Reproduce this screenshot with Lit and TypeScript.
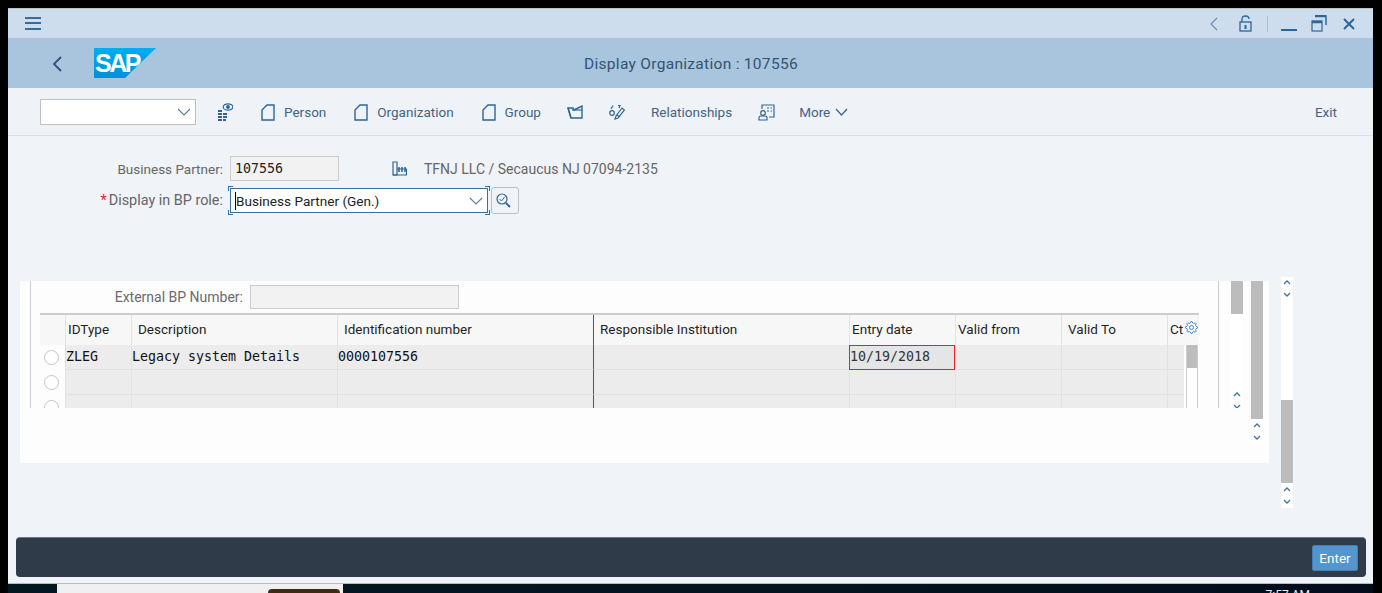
import { LitElement, html, css, svg } from 'lit';
import { customElement } from 'lit/decorators.js';

const icon = (w: number, h: number, body: unknown) => html`
  <svg width=${w} height=${h} viewBox="0 0 ${w} ${h}" fill="none" stroke="#2f6497" stroke-width="1.2">${body}</svg>`;

const docIcon = icon(14, 17, svg`<path d="M6 1H13V16H1V6Z" stroke-width="1.4"/>`);
const chevronDown = html`<svg width="14" height="8" viewBox="0 0 14 8" fill="none" stroke="#5f7f9c" stroke-width="1.1"><path d="M1 1L7 7L13 1"/></svg>`;
const scrollArrows = html`
  <svg width="12" height="20" viewBox="0 0 12 20" fill="none" stroke="#3f74a8" stroke-width="1.3">
    <path d="M3 6L6 3L9 6"/><path d="M3 15L6 18L9 15"/>
  </svg>`;

// gear outline: 8 teeth, alternating outer and inner radius
const gearPoints = Array.from({ length: 32 }, (_, i) => {
  const r = i % 4 < 2 ? 6 : 4.6;
  const a = ((i - 0.5) * Math.PI) / 16;
  return `${(6.5 + r * Math.cos(a)).toFixed(2)},${(6.5 + r * Math.sin(a)).toFixed(2)}`;
}).join(' ');

const columns = [
  { label: 'IDType', cls: 'p3' },
  { label: 'Description', cls: 'p7' },
  { label: 'Identification number', cls: 'p7' },
  { label: 'Responsible Institution', cls: 'p7 dark' },
  { label: 'Entry date', cls: 'p3' },
  { label: 'Valid from', cls: 'p3' },
  { label: 'Valid To', cls: 'p7' },
];

const rows = [
  ['ZLEG', 'Legacy system Details', '0000107556', '', '10/19/2018', '', '', ''],
  ['', '', '', '', '', '', '', ''],
  ['', '', '', '', '', '', '', ''],
];

@customElement('app-root')
class AppRoot extends LitElement {
  static styles = css`
    :host {
      display: block;
      width: 1382px;
      height: 593px;
      overflow: hidden;
      background: #000;
      padding: 8px 9px 0 8px;
      box-sizing: border-box;
      font-family: Roboto, "Liberation Sans", sans-serif;
      font-size: 14px;
      color: #32536f;
    }
    svg { display: block; flex: none; }
    .window {
      height: 576px;
      display: flex;
      flex-direction: column;
      background: #f0f3f7;
      border-top: 1px solid #b9c3cc;
      border-bottom: 1px solid #bbb;
      box-sizing: border-box;
    }
    .titlebar {
      height: 30px;
      flex: none;
      box-sizing: border-box;
      background: #cddded;
      border-bottom: 1px solid #b4c3d2;
      display: flex;
      align-items: center;
      padding: 0 18px 0 17px;
    }
    .titlebar .spacer { flex: 1; }
    .win-icons { display: flex; align-items: center; }
    .sep { width: 1px; height: 16px; background: #b3bfca; margin: 0 13px 0 15px; }
    .header {
      height: 49px;
      flex: none;
      background: #a9c4dd;
      display: flex;
      align-items: center;
      padding-left: 44px;
      position: relative;
    }
    .logo {
      width: 62px;
      height: 30px;
      margin-left: 32px;
      margin-top: -1px;
      background: linear-gradient(#00aeef, #0090d8);
      clip-path: polygon(0 0, 100% 0, 50% 100%, 0 100%);
      color: #fff;
      font: bold 25px/31px "Liberation Sans", sans-serif;
      letter-spacing: -2.5px;
      padding-left: 1px;
      box-sizing: border-box;
    }
    .title {
      position: absolute;
      left: 576px;
      top: 16px;
      font-size: 15.5px;
      letter-spacing: 0.3px;
      color: #2f5474;
    }
    .toolbar {
      height: 48px;
      flex: none;
      box-sizing: border-box;
      border-bottom: 1px solid #d5e0ec;
      background: #eff3f8;
      display: flex;
      align-items: center;
      padding: 1px 36px 0 32px;
      color: #3f6486;
      font-size: 13.5px;
    }
    .combo {
      width: 156px;
      height: 26px;
      box-sizing: border-box;
      border: 1px solid #bfbfbf;
      background: #fff;
      display: flex;
      align-items: center;
      justify-content: flex-end;
      padding-right: 4px;
      margin-right: 21px;
    }
    .tool { display: flex; align-items: center; gap: 9px; margin-right: 28px; }
    .tool.tight { margin-right: 26px; }
    .tool.more { gap: 5px; margin-right: 0; margin-left: -2px; }
    .toolbar .spacer { flex: 1; }
    .form {
      padding: 20px 0 0 0;
      height: 141px;
      box-sizing: border-box;
      flex: none;
      color: #666;
    }
    .form-row { display: flex; align-items: center; height: 25px; margin-bottom: 7px; }
    .form-label { width: 215px; text-align: right; margin-right: 7px; font-size: 13.5px; }
    .form-label.role { font-size: 14.4px; }
    .req { color: #d9262c; margin-right: 2px; }
    .readonly {
      width: 109px;
      height: 25px;
      box-sizing: border-box;
      border: 1px solid #ccc;
      background: #f2f2f2;
      color: #222;
      font: 13.3px/23px "DejaVu Sans Mono", monospace;
      padding-left: 4px;
      margin-right: 53px;
    }
    .partner { display: flex; align-items: center; gap: 17px; color: #666; }
    .select {
      position: relative;
      width: 258px;
      height: 25px;
      box-sizing: border-box;
      border: 1px solid #3a6f9f;
      background: #fff;
      display: flex;
      align-items: center;
      justify-content: space-between;
      padding: 0 4px 0 4px;
      color: #222;
      font-size: 13.6px;
    }
    .select .text { border-left: 1px solid #000; line-height: 18px; }
    .corner { position: absolute; width: 4px; height: 4px; border: 1px solid #3a6f9f; }
    .corner.tl { left: -3px; top: -3px; border-right: 0; border-bottom: 0; }
    .corner.tr { right: -3px; top: -3px; border-left: 0; border-bottom: 0; }
    .corner.bl { left: -3px; bottom: -3px; border-right: 0; border-top: 0; }
    .corner.br { right: -3px; bottom: -3px; border-left: 0; border-top: 0; }
    .search {
      width: 28px;
      height: 27px;
      box-sizing: border-box;
      margin-left: 3px;
      border: 1px solid #bfbfbf;
      border-radius: 3px;
      display: flex;
      align-items: center;
      justify-content: center;
      padding-right: 3px;
    }
    .stage { display: flex; align-items: flex-start; margin-left: 12px; height: 231px; flex: none; }
    .panel {
      margin-top: 4px;
      width: 1249px;
      height: 182px;
      background: #fdfdfe;
      display: flex;
      align-items: flex-start;
      padding-left: 10px;
      box-sizing: border-box;
      flex: none;
    }
    .frame {
      width: 1189px;
      height: 127px;
      box-sizing: border-box;
      overflow: hidden;
      border-left: 1px solid #ccc;
      border-right: 1px solid #ccc;
      padding-left: 9px;
      flex: none;
    }
    .ext { display: flex; align-items: center; height: 32px; color: #6b6b6b; }
    .ext .form-label { width: 203px; font-size: 14px; }
    .ext .box { width: 209px; height: 24px; box-sizing: border-box; border: 1px solid #ccc; background: #f2f2f2; }
    .thead {
      width: 1159px;
      height: 32px;
      box-sizing: border-box;
      border-top: 2px solid #ccc;
      display: grid;
      grid-template-columns: 25px 66px 206px 256px 256px 106px 106px 106px 32px;
      background: #f7f7f7;
      color: #1f1f1f;
      font-size: 13.5px;
    }
    .th {
      border-left: 1px solid #e2e2e2;
      line-height: 29px;
      box-sizing: border-box;
      white-space: nowrap;
    }
    .th:first-child { border-left: 0; }
    .th.ct { display: flex; justify-content: space-between; padding-right: 1px; }
    .th.ct svg { margin-top: 6px; }
    .p3 { padding-left: 2px; }
    .p7 { padding-left: 6px; }
    .dark { border-left: 1px solid #555 !important; }
    .tbody { display: flex; width: 1159px; }
    .rows { width: 1144px; flex: none; }
    .row {
      display: grid;
      grid-template-columns: 25px 66px 206px 256px 256px 106px 106px 106px 17px;
      height: 25px;
    }
    .radio-cell { display: flex; align-items: center; justify-content: center; padding-right: 3px; box-sizing: border-box; background: #fdfdfe; }
    .radio { width: 13px; height: 13px; border: 1px solid #c4c4c4; border-radius: 50%; background: #fff; }
    .td {
      background: #ececec;
      border-left: 1px solid #e2e2e2;
      border-bottom: 1px solid #e2e2e2;
      box-sizing: border-box;
      font: 13.3px/23px "DejaVu Sans Mono", monospace;
      color: #111;
      white-space: pre;
      overflow: hidden;
    }
    .td.active {
      border: 1px solid #e8202a;
      background: #e5e5e5;
      color: #333;
      line-height: 22px;
    }
    .inner-scroll {
      width: 15px;
      height: 63px;
      background: #fff;
      padding: 0 1px 0 2px;
      box-sizing: border-box;
      flex: none;
    }
    .inner-track { height: 100%; border-left: 1px solid #ccc; border-right: 1px solid #ccc; box-sizing: border-box; }
    .inner-thumb { height: 23px; background: #bcbcbc; }
    .sb { width: 12px; flex: none; display: flex; flex-direction: column; }
    .sb.one { margin-left: 12px; background: #fff; height: 127px; overflow: hidden; }
    .sb.two { margin-left: 8px; }
    .sb .thumb { background: #bcbcbc; flex: none; }
    .sb .fill { flex: 1; }
    .sb .arrows-end { height: 18px; flex: none; }
    .sb .arrows-two { background: #fff; padding: 2px 0 3px; }
    .sb .arrows-top { padding-top: 1px; }
    .sb .arrows-bottom { height: 25px; padding-top: 2px; box-sizing: border-box; }
    .sb.three { margin-left: 12px; background: #fff; height: 231px; }
    .dock {
      margin: auto 7px 6px 8px;
      height: 40px;
      flex: none;
      box-sizing: border-box;
      background: #2f3b48;
      border-top: 1px solid #6f7a84;
      border-radius: 4px;
      display: flex;
      align-items: center;
      justify-content: flex-end;
      padding-right: 8px;
    }
    .enter {
      width: 46px;
      height: 26px;
      box-sizing: border-box;
      background: #5495cd;
      border: 1px solid #4080b8;
      border-radius: 2px;
      color: #fff;
      text-align: center;
      line-height: 24px;
      font-size: 13.5px;
    }
    .taskbar {
      height: 9px;
      width: 1365px;
      display: flex;
      overflow: hidden;
      background: linear-gradient(90deg, #03171f, #04131f 60%, #020c1c);
    }
    .task-gap { width: 49px; }
    .task-app { width: 286px; background: #f0f0f0; padding: 5px 0 0 211px; box-sizing: border-box; }
    .task-pill { width: 72px; height: 4px; background: #3e2a10; border-radius: 5px 5px 0 0; }
    .clock {
      margin-left: auto;
      margin-right: 63px;
      padding-top: 4px;
      color: #eee;
      font-size: 12px;
      line-height: 14px;
    }
  `;

  render() {
    return html`
      <div class="window">
        <div class="titlebar">
          <svg width="16" height="13" viewBox="0 0 16 13" fill="#3a6a9a"><rect y="0" width="16" height="2"/><rect y="5" width="16" height="2"/><rect y="11" width="16" height="2"/></svg>
          <div class="spacer"></div>
          <div class="win-icons">
            <svg width="8" height="14" viewBox="0 0 8 14" fill="none" stroke="#6f8fb0" stroke-width="1.2" style="margin-right:21px"><path d="M7 1L1 7L7 13"/></svg>
            <svg width="13" height="17" viewBox="0 0 13 17" fill="none" stroke="#2f6497" stroke-width="1.3"><path d="M3 7V4Q3 1 6.500 1Q10 1 10 4"/><rect x="1" y="7" width="11" height="9"/><rect x="5.500" y="10" width="2" height="4" fill="#2f6497" stroke="none"/></svg>
            <div class="sep"></div>
            <svg width="16" height="17" viewBox="0 0 16 17" fill="none" stroke="#2f6497" stroke-width="2" style="margin-right:14px"><path d="M0 15H16"/></svg>
            <svg width="16" height="17" viewBox="0 0 16 17" fill="none" stroke="#2f6497" style="margin-right:16px"><path d="M4 1H15V10" stroke-width="1.5"/><path d="M4 1H15" stroke-width="2.500"/><rect x="1" y="6" width="10" height="10" stroke-width="1.200"/><path d="M1 7H11" stroke-width="2.500"/></svg>
            <svg width="12" height="12" viewBox="0 0 12 12" fill="none" stroke="#2f6497" stroke-width="2"><path d="M1 1L11 11M11 1L1 11"/></svg>
          </div>
        </div>

        <div class="header">
          <svg width="10" height="16" viewBox="0 0 10 16" fill="none" stroke="#2c5378" stroke-width="1.800"><path d="M9 1L2 8L9 15"/></svg>
          <div class="logo">SAP</div>
          <div class="title">Display Organization : 107556</div>
        </div>

        <div class="toolbar">
          <div class="combo">${chevronDown}</div>
          <div class="tool">
            ${icon(16, 18, svg`
              <ellipse cx="11" cy="4" rx="4.800" ry="3.200"/><circle cx="11" cy="4" r="1.300" fill="#2f6497"/>
              <path d="M1 8H5M1 11H11M1 14H10M1 17H9" stroke-width="2" stroke-dasharray="4 1"/>`)}
          </div>
          <div class="tool">${docIcon}<span>Person</span></div>
          <div class="tool">${docIcon}<span>Organization</span></div>
          <div class="tool tight">${docIcon}<span>Group</span></div>
          <div class="tool tight">
            ${icon(16, 15, svg`<path d="M1 3H6L7 5L15 1V13H4Z" stroke-width="1.400"/><path d="M1 3L4 13" stroke-width="1.400"/><path d="M5 5H15"/>`)}
          </div>
          <div class="tool tight">
            ${icon(16, 16, svg`
              <circle cx="3" cy="9" r="2.300"/><path d="M2 5L4 1.500"/><path d="M9 1.500H11L10 4"/>
              <path d="M6 15L7 12L13 4L15.500 6L9 14Z"/><path d="M8 11L10.500 13"/>`)}
          </div>
          <div class="tool tight"><span>Relationships</span></div>
          <div class="tool tight">
            ${icon(17, 17, svg`
              <circle cx="5" cy="9" r="2.300"/><path d="M1 16V13.500Q1 12 3 12H7Q9 12 9 13.500V16Z"/>
              <path d="M4 5V1H16V13H11"/><path d="M9 4H14M9 7H14" stroke-dasharray="2 1.500"/>`)}
          </div>
          <div class="tool more"><span>More</span>
            <svg width="13" height="8" viewBox="0 0 13 8" fill="none" stroke="#3f6486" stroke-width="1.200"><path d="M1 1L6.500 7L12 1"/></svg>
          </div>
          <div class="spacer"></div>
          <span>Exit</span>
        </div>

        <div class="form">
          <div class="form-row">
            <span class="form-label">Business Partner:</span>
            <div class="readonly">107556</div>
            <div class="partner">
              ${icon(15, 15, svg`
                <path d="M1 1H5V14H1Z"/><path d="M1 14H14.500V8H5"/>
                <path d="M7 6V11M10 6V11M13 6V11" stroke-width="1.500"/>`)}
              <span>TFNJ LLC / Secaucus NJ 07094-2135</span>
            </div>
          </div>
          <div class="form-row">
            <span class="form-label role"><span class="req">*</span>Display in BP role:</span>
            <div class="select">
              <span class="text">Business Partner (Gen.)</span>
              ${chevronDown}
              <i class="corner tl"></i><i class="corner tr"></i><i class="corner bl"></i><i class="corner br"></i>
            </div>
            <div class="search">
              ${icon(15, 15, svg`
                <circle cx="6" cy="6" r="5"/><path d="M3.500 6L5.500 8L8.500 4" stroke-width="1"/>
                <path d="M10 10L14 14" stroke-width="1.800"/>`)}
            </div>
          </div>
        </div>

        <div class="stage">
          <div class="panel">
            <div class="frame">
              <div class="ext">
                <span class="form-label">External BP Number:</span>
                <div class="box"></div>
              </div>
              <div class="thead">
                <div class="th"></div>
                ${columns.map(c => html`<div class="th ${c.cls}">${c.label}</div>`)}
                <div class="th p3 ct">Ct
                  <svg width="13" height="13" viewBox="0 0 13 13" fill="none" stroke="#3f7fb8" stroke-width="0.9"><circle cx="6.500" cy="6.500" r="2"/><polygon points=${gearPoints}/></svg>
                </div>
              </div>
              <div class="tbody">
                <div class="rows">
                  ${rows.map(r => html`
                    <div class="row">
                      <div class="radio-cell"><div class="radio"></div></div>
                      ${r.map((v, i) => html`<div class="td ${i === 3 ? 'dark' : ''} ${v && i === 4 ? 'active' : ''}">${v}</div>`)}
                    </div>`)}
                </div>
                <div class="inner-scroll"><div class="inner-track"><div class="inner-thumb"></div></div></div>
              </div>
            </div>
            <div class="sb one">
              <div class="thumb" style="height:33px"></div>
              <div class="fill"></div>
              <div class="arrows-end">${scrollArrows}</div>
            </div>
            <div class="sb two">
              <div class="thumb" style="height:138px"></div>
              <div class="arrows-two">${scrollArrows}</div>
            </div>
          </div>
          <div class="sb three">
            <div class="arrows-top">${scrollArrows}</div>
            <div class="fill"></div>
            <div class="thumb" style="height:83px"></div>
            <div class="arrows-bottom">${scrollArrows}</div>
          </div>
        </div>

        <div class="dock"><div class="enter">Enter</div></div>
      </div>
      <div class="taskbar">
        <div class="task-gap"></div>
        <div class="task-app"><div class="task-pill"></div></div>
        <div class="clock">7:57 AM</div>
      </div>
    `;
  }
}
